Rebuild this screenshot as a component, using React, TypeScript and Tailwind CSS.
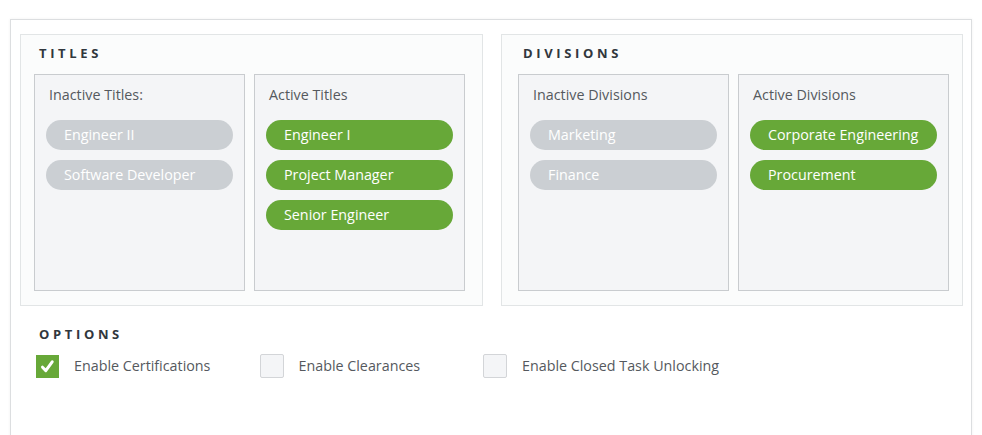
const GROUPS = [
  {
    title: "TITLES",
    inactiveLabel: "Inactive Titles:",
    activeLabel: "Active Titles",
    inactive: ["Engineer II", "Software Developer"],
    active: ["Engineer I", "Project Manager", "Senior Engineer"],
  },
  {
    title: "DIVISIONS",
    inactiveLabel: "Inactive Divisions",
    activeLabel: "Active Divisions",
    inactive: ["Marketing", "Finance"],
    active: ["Corporate Engineering", "Procurement"],
  },
];

const OPTIONS = [
  { label: "Enable Certifications", checked: true },
  { label: "Enable Clearances", checked: false },
  { label: "Enable Closed Task Unlocking", checked: false },
];

const PillList = ({ label, items, active }: { label: string; items: string[]; active?: boolean }) => (
  <div className="w-[211px] h-[217px] border border-[#c9cccf] bg-[#f4f5f7] px-[11px] pt-[10px]">
    <div className="pl-[3px] text-[14.3px] leading-[20px] text-[#55595e]">{label}</div>
    <div className="mt-[15px] flex flex-col gap-[10px]">
      {items.map((item) => (
        <div
          key={item}
          className={`h-[30px] rounded-full pl-[18px] flex items-center text-[14.3px] text-white whitespace-nowrap ${
            active ? "bg-[#67a838]" : "bg-[#cbcfd3]"
          }`}
        >
          {item}
        </div>
      ))}
    </div>
  </div>
);

export default function App() {
  return (
    <div
      className="min-h-[435px] bg-white pt-[19px] px-[10px]"
      style={{ fontFamily: "'Open Sans', Lato, sans-serif" }}
    >
      <div className="h-[420px] border border-b-0 border-[#dcdee0] shadow-[0_0_3px_rgba(0,0,0,0.06)] pl-[9px] pt-[14px]">
        <div className="flex gap-[18px]">
          {GROUPS.map((group, i) => (
            <div
              key={group.title}
              className={`${i === 0 ? "w-[463px] pl-[13px]" : "w-[462px] pl-[16px]"} border border-[#e2e5e6] bg-[#fbfcfc] pt-[8px] pb-[14px]`}
            >
              <div className="pl-[5px] mb-[11px] text-[13px] leading-[20px] font-bold tracking-[0.28em] text-[#31373d]">
                {group.title}
              </div>
              <div className="flex gap-[9px]">
                <PillList label={group.inactiveLabel} items={group.inactive} />
                <PillList label={group.activeLabel} items={group.active} active />
              </div>
            </div>
          ))}
        </div>

        <div className="pl-[16px] pt-[18px]">
          <div className="pl-[3px] text-[13px] leading-[20px] font-bold tracking-[0.28em] text-[#31373d]">
            OPTIONS
          </div>
          <div className="mt-[10px] flex">
            {OPTIONS.map((opt, i) => (
              <div
                key={opt.label}
                className={`${i < OPTIONS.length - 1 ? "w-[223.5px]" : ""} flex items-center whitespace-nowrap`}
              >
                {opt.checked ? (
                  <div className="w-[23px] h-[23px] bg-[#67a838] flex items-center justify-center">
                    <svg viewBox="0 0 23 23" className="w-[23px] h-[23px]">
                      <path
                        d="M6.5 12.2 L9.8 15.6 L16.2 6.8"
                        fill="none"
                        stroke="white"
                        strokeWidth={3}
                        strokeLinecap="round"
                        strokeLinejoin="round"
                      />
                    </svg>
                  </div>
                ) : (
                  <div className="w-[24px] h-[24px] rounded-[2px] border border-[#d3d5d8] bg-[#f4f5f7]" />
                )}
                <span className="ml-[15px] text-[14.3px] text-[#55595e]">{opt.label}</span>
              </div>
            ))}
          </div>
        </div>
      </div>
    </div>
  );
}
